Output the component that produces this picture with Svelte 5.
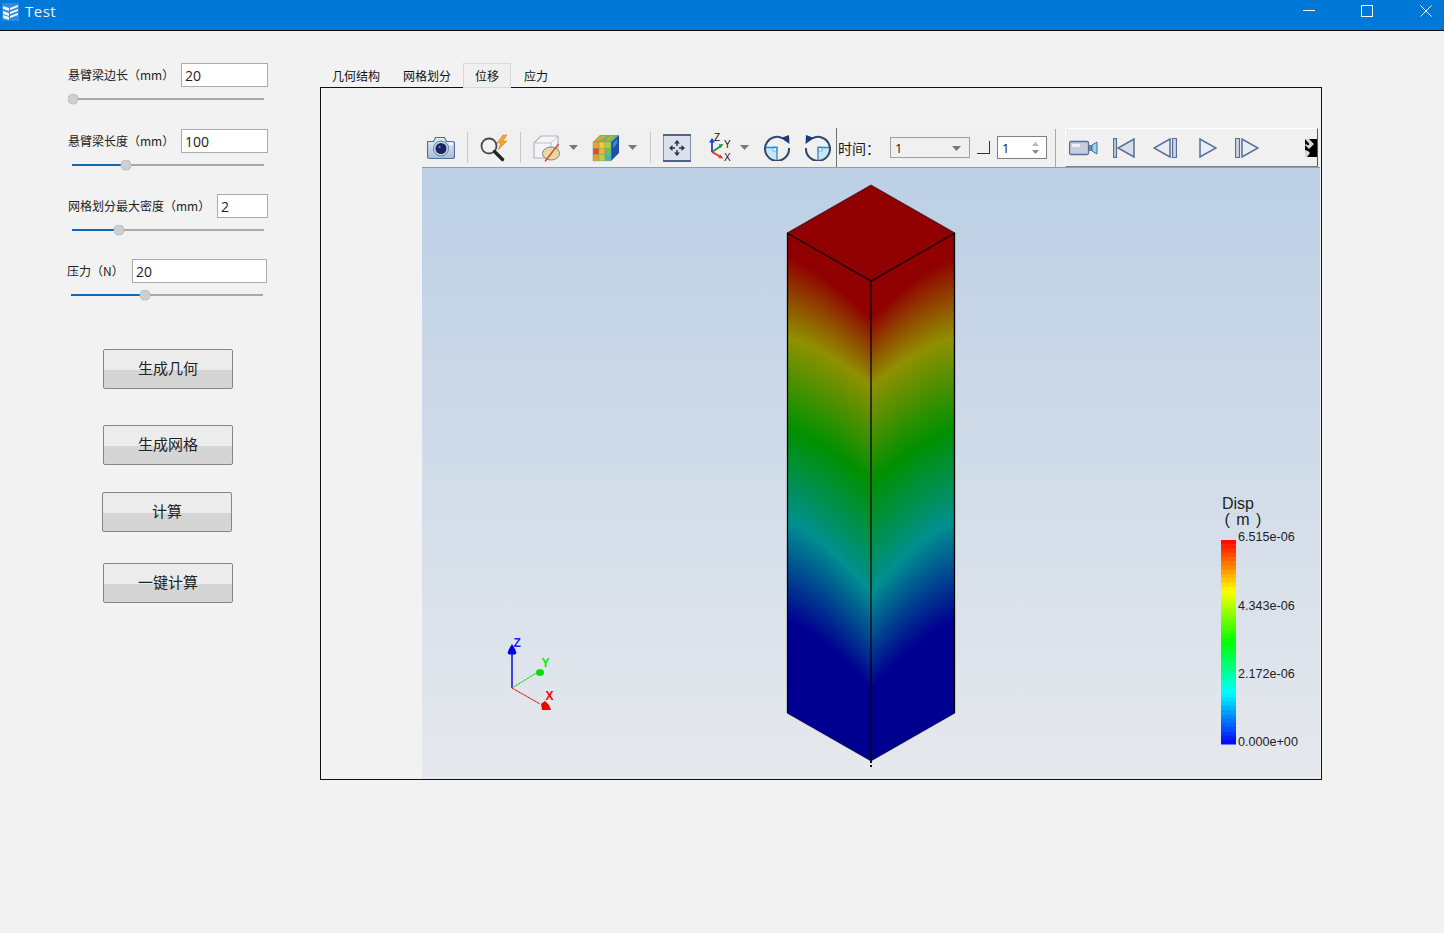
<script>
  const fields = [
    { label: "悬臂梁边长（mm）", value: "20", inputW: 87, pos: 1, cls: "" },
    { label: "悬臂梁长度（mm）", value: "100", inputW: 87, pos: 54, cls: "" },
    { label: "网格划分最大密度（mm）", value: "2", inputW: 51, pos: 47, cls: "" },
    { label: "压力（N）", value: "20", inputW: 135, pos: 74, cls: "shift" },
  ];
  const actions = [
    { text: "生成几何", cls: "b1" },
    { text: "生成网格", cls: "b2" },
    { text: "计算", cls: "b3" },
    { text: "一键计算", cls: "b4" },
  ];
  const tabs = ["几何结构", "网格划分", "位移", "应力"];

  // isolines on a side face: y at the outer edge, y at the centre edge
  const STOPS = [
    ["#900000", 258, 318],
    ["#909000", 338, 385],
    ["#009000", 430, 482],
    ["#009090", 522, 592],
    ["#000090", 622, 688],
  ];
  const STRIP = 2;
  const strips = Array.from({ length: 42 }, (_, i) => {
    const t = Math.pow((i + 0.5) / 42, 1.4);
    return {
      i,
      stops: STOPS.map(([c, a, b]) => ({
        c,
        off: ((a + (b - a) * t - 200) / 600).toFixed(4),
      })),
    };
  });

  function band(t) {
    // t = 0 bottom blue, 1 top red
    const s = t * 4;
    const k = s - Math.floor(s);
    const seg = Math.min(Math.floor(s), 3);
    const f = s >= 4 ? 1 : k;
    const v = Math.round(f * 255);
    if (seg === 0) return `rgb(0,${v},255)`;
    if (seg === 1) return `rgb(0,255,${255 - v})`;
    if (seg === 2) return `rgb(${v},255,0)`;
    return `rgb(255,${255 - v},0)`;
  }
  const BANDS = 48;
  const bands = Array.from({ length: BANDS }, (_, i) => ({
    y: 540 + (i * 204) / BANDS,
    c: band(1 - (i + 0.5) / BANDS),
  }));
  const legend = [
    { text: "6.515e-06", y: 541 },
    { text: "4.343e-06", y: 610 },
    { text: "2.172e-06", y: 678 },
    { text: "0.000e+00", y: 746 },
  ];
  const cubeColors = [
    ["#f0a030", "#f4c838", "#a8d040"],
    ["#e84828", "#f4b028", "#58c860"],
    ["#e8a020", "#b8d040", "#38b8c0"],
  ];
</script>

<div class="window">
  <header class="titlebar">
    <svg class="appicon" width="17" height="18" viewBox="0 0 17 18">
      <rect width="17" height="18" fill="#2b8ce0" />
      <path d="M1 3l6 2v3L1 6zM1 8l6 2v3l-6-2zM1 12l6 2v3l-6-2z" fill="#fff" opacity=".92" />
      <path d="M8 5l8-3v2L8 7zM8 9l8-3v2l-8 3zM8 13l8-3v2l-8 3z" fill="#fff" />
    </svg>
    <span class="title">Test</span>
    <div class="winbtns">
      <svg width="12" height="12" viewBox="0 0 12 12"><path d="M0 5.500h12" stroke="#fff" /></svg>
      <svg width="12" height="12" viewBox="0 0 12 12"><rect x=".5" y=".5" width="11" height="11" fill="none" stroke="#fff" /></svg>
      <svg width="12" height="12" viewBox="0 0 12 12"><path d="M.5.5l11 11M11.500.5l-11 11" stroke="#fff" /></svg>
    </div>
  </header>

  <div class="body">
    <aside class="side">
      {#each fields as f}
        <div class="field {f.cls}">
          <div class="row">
            <span class="lbl">{f.label}</span>
            <input class="num" value={f.value} style:width="{f.inputW}px" />
          </div>
          <div class="slider">
            <div class="fill" style:width="{f.pos}px"></div>
            <div class="knob" style:left="{f.pos}px"></div>
          </div>
        </div>
      {/each}
      <div class="actions">
        {#each actions as a}
          <button class="act {a.cls}">{a.text}</button>
        {/each}
      </div>
    </aside>

    <main class="main">
      <div class="tabs">
        {#each tabs as t, i}
          <div class="tab t{i}" class:on={i === 2}>{t}</div>
        {/each}
      </div>
      <section class="panel">
        <div class="viewer">
          <div class="toolbar">
            <!-- camera -->
            <svg class="g5" width="28" height="24" viewBox="0 0 28 24">
              <defs>
                <linearGradient id="cam" x1="0" y1="0" x2="0" y2="1">
                  <stop offset="0" stop-color="#e8edf5" /><stop offset="1" stop-color="#a9bcd6" />
                </linearGradient>
              </defs>
              <path d="M.5 5.500h6l2-4h9l2 4h6a2 2 0 0 1 2 2v13a2 2 0 0 1-2 2H2.500a2 2 0 0 1-2-2z" fill="url(#cam)" stroke="#4f6f9b" stroke-width="1.200" />
              <circle cx="14" cy="12.500" r="7.500" fill="#c9d6e8" stroke="#5f7ca6" />
              <circle cx="14" cy="12.500" r="5.500" fill="#14285f" />
              <circle cx="12.500" cy="11" r="1.200" fill="#5a78b8" />
              <rect x="22.500" y="7" width="3" height="2" fill="#fff" />
            </svg>
            <i class="sep g12"></i>
            <!-- magnifier with lightning -->
            <svg class="g12" width="29" height="28" viewBox="0 0 29 28">
              <circle cx="9" cy="12" r="7.500" fill="#eef2f6" stroke="#4a4a4a" stroke-width="1.800" />
              <path d="M14.500 17.500l8 8" stroke="#222" stroke-width="3.400" stroke-linecap="round" />
              <path d="M23 1l-6 8h4l-3 7 9-9h-4l4-6z" fill="#f0a830" stroke="#d08818" stroke-width=".6" />
            </svg>
            <i class="sep g11"></i>
            <!-- box with clipped ellipse -->
            <svg class="g12" width="27" height="28" viewBox="0 0 27 28">
              <path d="M1 9l7-7h17v14l-7 8H1z" fill="#f4f5f7" stroke="#aeb4c0" stroke-width="1.200" />
              <path d="M1 9h17l7-7M18 9v15" fill="none" stroke="#bcc2cc" />
              <ellipse cx="18" cy="19.500" rx="8.500" ry="6.500" fill="#ead9a0" stroke="#7d8390" />
              <path d="M25.500 10L12 27.500" stroke="#d9482e" stroke-width="1.400" />
            </svg>
            <svg class="g9 drop" width="9" height="5" viewBox="0 0 9 5"><path d="M0 0h9L4.500 5z" fill="#777" /></svg>
            <!-- rainbow cube -->
            <svg class="g14" width="27" height="28" viewBox="0 0 27 28">
              <path d="M1 8l7-7h19l-8 7z" fill="#5bbd70" />
              <path d="M3 7l6-5h5l-6 5zM13 7l6-5h3l-6 5z" fill="#e8a030" />
              <path d="M19 8l8-7v18l-8 8z" fill="#1c4fa8" />
              <path d="M21 9l4-4v5l-4 4z" fill="#3f86d8" />
              {#each cubeColors as rowC, r}
                {#each rowC as c, k}
                  <rect x={1 + k * 6} y={8 + r * 6.300} width="6" height="6.300" fill={c} stroke="#8a9a70" stroke-width=".5" />
                {/each}
              {/each}
            </svg>
            <svg class="g9 drop" width="9" height="5" viewBox="0 0 9 5"><path d="M0 0h9L4.500 5z" fill="#777" /></svg>
            <i class="sep g13"></i>
            <!-- reset view -->
            <svg class="g12" width="28" height="28" viewBox="0 0 28 28">
              <rect x=".5" y=".5" width="27" height="27" fill="#dbe0ea" stroke="#8292ad" />
              <rect x="0" y="0" width="28" height="2" fill="#4f6288" />
              <rect x="0" y="26" width="28" height="2" fill="#4f6288" />
              <path d="M14 9v3M14 16v3M9 14h3M16 14h3" stroke="#26344f" stroke-width="1.400" />
              <path d="M14 6l-3 3.500h6zM14 22l-3-3.500h6zM6 14l3.500-3v6zM22 14l-3.500-3v6z" fill="#26344f" />
            </svg>
            <!-- axes -->
            <svg class="g17" width="24" height="30" viewBox="0 -1 24 30">
              <path d="M4 18V7" stroke="#1c3fd0" stroke-width="1.800" />
              <path d="M4 4l-3 4.500h6z" fill="#1c3fd0" />
              <path d="M4 18l9-6" stroke="#1c9040" stroke-width="1.800" />
              <path d="M15.500 10l-5 .5 2 3.500z" fill="#1c9040" />
              <path d="M4 18l9 5" stroke="#e03030" stroke-width="1.800" />
              <path d="M15.500 24.500l-5-.5 1.500-3.500z" fill="#e03030" />
              <text x="6" y="7" class="ax">Z</text>
              <text x="16" y="13.500" class="ax">Y</text>
              <text x="16" y="27" class="ax">X</text>
            </svg>
            <svg class="g8 drop" width="9" height="5" viewBox="0 0 9 5"><path d="M0 0h9L4.500 5z" fill="#777" /></svg>
            <!-- rotate -->
            <svg class="g15" width="26" height="26" viewBox="0 0 26 26">
              <path d="M1 12h12v13A12.500 12.500 0 0 1 1 12z" fill="#c8e6f6" />
              <rect x="9" y="12" width="4" height="4" fill="#fff" stroke="#2b8ad0" stroke-width=".6" />
              <path d="M1 12.500h12V25" fill="none" stroke="#2b8ad0" stroke-width="1.300" />
              <path d="M19 3.500A12 12 0 1 0 25 13" fill="none" stroke="#2f4a6a" stroke-width="2" />
              <path d="M25.500 9L25 0l-8 3z" fill="#1a3a74" />
            </svg>
            <svg class="g15 flip" width="26" height="26" viewBox="0 0 26 26">
              <path d="M1 12h12v13A12.500 12.500 0 0 1 1 12z" fill="#c8e6f6" />
              <rect x="9" y="12" width="4" height="4" fill="#fff" stroke="#2b8ad0" stroke-width=".6" />
              <path d="M1 12.500h12V25" fill="none" stroke="#2b8ad0" stroke-width="1.300" />
              <path d="M19 3.500A12 12 0 1 0 25 13" fill="none" stroke="#2f4a6a" stroke-width="2" />
              <path d="M25.500 9L25 0l-8 3z" fill="#1a3a74" />
            </svg>
            <i class="vline g5"></i>
            <span class="timelbl">时间：</span>
            <div class="combo">
              <span>1</span>
              <svg width="9" height="5" viewBox="0 0 9 5"><path d="M0 0h9L4.500 5z" fill="#777" /></svg>
            </div>
            <div class="corner"></div>
            <div class="spin">
              <span>1</span>
              <svg width="7" height="12" viewBox="0 0 7 12">
                <path d="M3.500 0L7 4H0z" fill="#b5b5b5" /><path d="M0 8h7l-3.500 4z" fill="#8a8a8a" />
              </svg>
            </div>
            <i class="sep tall g8"></i>
            <div class="media">
              <svg class="m4" width="29" height="16" viewBox="0 0 29 16">
                <rect x=".5" y="1.500" width="19" height="13" rx="1.500" fill="#c4cedd" stroke="#566f99" stroke-width="1.300" />
                <rect x="3" y="4" width="8" height="3" fill="#eef2f7" />
                <path d="M20 5l3 0v6h-3z" fill="#6d82a6" />
                <path d="M23 5l5-3v12l-5-3z" fill="#8fd8ea" stroke="#4a6a9a" />
              </svg>
              <svg class="m15" width="22" height="20" viewBox="0 0 22 20">
                <rect x=".5" y=".5" width="3" height="19" fill="#c0cadc" stroke="#566f99" stroke-width="1.200" />
                <path d="M21 1v18L5 10z" fill="#d6dce8" stroke="#566f99" stroke-width="1.500" />
              </svg>
              <svg class="m18" width="24" height="20" viewBox="0 0 24 20">
                <path d="M17 1v18L1 10z" fill="#e8ecf3" stroke="#566f99" stroke-width="1.500" />
                <rect x="19.500" y=".5" width="4" height="19" fill="#ccd4e4" stroke="#566f99" stroke-width="1.200" />
              </svg>
              <svg class="m21" width="19" height="20" viewBox="0 0 19 20">
                <path d="M2 1v18l16-9z" fill="#e8ecf3" stroke="#566f99" stroke-width="1.500" />
              </svg>
              <svg class="m19" width="24" height="20" viewBox="0 0 24 20">
                <rect x=".5" y=".5" width="4" height="19" fill="#ccd4e4" stroke="#566f99" stroke-width="1.200" />
                <path d="M7 1v18l16-9z" fill="#e8ecf3" stroke="#566f99" stroke-width="1.500" />
              </svg>
              <svg class="more" width="12" height="18" viewBox="0 0 12 18">
                <rect x="0" y="0" width="12" height="18" fill="#000" />
                <path d="M0 0h4l5 5-5 5-4-4 1-1 2 1.500L4.500 5zM0 11l3 1 2 2-3 4H0z" fill="#f0f0f0" opacity=".9" />
              </svg>
            </div>
          </div>

          <svg class="canvas" width="898" height="611" viewBox="422 168 898 611">
            <defs>
              {#each strips as s}
                <linearGradient id="s{s.i}" gradientUnits="userSpaceOnUse" x1="0" y1="200" x2="0" y2="800">
                  {#each s.stops as st}
                    <stop offset={st.off} stop-color={st.c} />
                  {/each}
                </linearGradient>
              {/each}
              <clipPath id="faceL"><polygon points="787,233 871,281 871,761 787,713" /></clipPath>
              <clipPath id="faceR"><polygon points="871,281 955,233 955,713 871,761" /></clipPath>
            </defs>

            <polygon points="871,185 955,233 871,281 787,233" fill="#900000" />
            <g clip-path="url(#faceL)">
              {#each strips as s}
                <rect x={787 + s.i * STRIP} y="225" width={STRIP + 0.5} height="545" fill="url(#s{s.i})" />
              {/each}
            </g>
            <g clip-path="url(#faceR)">
              {#each strips as s}
                <rect x={953 - s.i * STRIP} y="225" width={STRIP + 0.5} height="545" fill="url(#s{s.i})" />
              {/each}
            </g>
            <g stroke="#000" fill="none">
              <path d="M787 233L871 281L955 233" stroke-width="1.100" />
              <path d="M787 233L871 185L955 233" stroke-width=".6" />
              <path d="M787.500 233V713M871 281V761M954.500 233V713" stroke-width="1.300" />
              <path d="M787 713L871 761L955 713" stroke-width=".5" />
            </g>
            <rect x="870" y="761" width="2" height="2" fill="#111" />
            <rect x="870" y="765" width="2" height="2" fill="#111" />

            <!-- orientation axes -->
            <path d="M512 688V652" stroke="#0000e0" stroke-width="1.400" />
            <path d="M512 644l-3 5-1.500 4 1.500 1.500h6l1.500-1.500-1.500-4z" fill="#0000e0" />
            <text x="513.500" y="647" class="gizmo" fill="#2020ff">Z</text>
            <path d="M512 688l26-16" stroke="#00e000" stroke-dasharray="3 .5" />
            <ellipse cx="540" cy="672.500" rx="4" ry="3.500" fill="#00e000" />
            <text x="541.500" y="667" class="gizmo" fill="#00f000">Y</text>
            <path d="M512 688l28 16" stroke="#f00000" stroke-dasharray="3 .5" />
            <path d="M541 704l4-3 4 4 2 5h-9z" fill="#f00000" />
            <text x="545.500" y="700" class="gizmo" fill="#ff0000">X</text>

            <!-- scalar bar -->
            {#each bands as b}
              <rect x="1221" y={b.y} width="15" height={204 / BANDS + 0.5} fill={b.c} />
            {/each}
            <text x="1222" y="509" class="ltitle">Disp</text>
            <text x="1224.500" y="525" class="ltitle unit">( m )</text>
            {#each legend as l}
              <text x="1238" y={l.y} class="ltick">{l.text}</text>
            {/each}
          </svg>
        </div>
      </section>
    </main>
  </div>
</div>

<style>
  :global(body) {
    background: #f2f2f2;
  }
  .window {
    width: 1444px;
    height: 933px;
    overflow: hidden;
    background: #f2f2f2;
    font-family: "Noto Sans CJK SC", "Liberation Sans", sans-serif;
    color: #1a1a1a;
  }

  .titlebar {
    display: flex;
    align-items: center;
    height: 30px;
    padding-left: 2px;
    background: #0078d7;
    border-bottom: 1px solid #0a0a0a;
    color: #fff;
  }
  .appicon {
    margin-top: -6px;
  }
  .title {
    margin-left: 6px;
    margin-top: -9px;
    font: 15px "Open Sans", sans-serif;
    letter-spacing: 0.5px;
    color: #eaf3fb;
  }
  .winbtns {
    display: flex;
    gap: 47px;
    margin-left: auto;
    margin-right: 12px;
    margin-top: -8px;
  }
  .winbtns svg:first-child {
    margin-right: -1px;
  }

  .body {
    display: flex;
  }
  .side {
    width: 320px;
    flex: none;
    padding: 32px 0 0 68px;
    box-sizing: border-box;
  }
  .field {
    width: 200px;
    height: 65px;
  }
  .field:first-child {
    height: 66px;
  }
  .field.shift {
    margin-left: -1px;
  }
  .row {
    display: flex;
    align-items: center;
    justify-content: space-between;
    height: 24px;
  }
  .lbl {
    font-size: 12px;
    white-space: nowrap;
    color: #222;
    margin-top: -1px;
  }
  .num {
    box-sizing: border-box;
    height: 24px;
    padding: 0 3px;
    border: 1px solid #ababab;
    background: #fff;
    font: 14px "Open Sans", sans-serif;
    color: #222;
    outline: none;
    flex: none;
  }
  .slider {
    position: relative;
    width: 192px;
    height: 2px;
    margin: 11px 0 0 4px;
    background: #a9a9a9;
  }
  .fill {
    height: 100%;
    background: #0f67b5;
  }
  .knob {
    position: absolute;
    top: 1px;
    width: 11px;
    height: 11px;
    box-sizing: border-box;
    border-radius: 50%;
    border: 1px dotted #aaa;
    background: #cfcfcf;
    transform: translate(-50%, -50%);
  }

  .actions {
    display: flex;
    flex-direction: column;
    padding-top: 25px;
  }
  .act {
    width: 130px;
    height: 40px;
    margin-left: 35px;
    padding: 0 0 3px;
    border: 1px solid #858585;
    border-radius: 2px;
    background: linear-gradient(#ececec 0 53%, #d5d5d5 53% 100%);
    font: 15px "Noto Sans CJK SC", sans-serif;
    color: #222;
  }
  .b2 {
    margin-top: 36px;
  }
  .b3 {
    margin-top: 27px;
    margin-left: 34px;
  }
  .b4 {
    margin-top: 31px;
  }

  .main {
    width: 1002px;
    padding-top: 32px;
  }
  .tabs {
    display: flex;
    height: 24px;
    font-size: 12px;
    color: #111;
  }
  .tab {
    box-sizing: border-box;
    height: 25px;
    padding: 1px 11px 0;
    line-height: 22px;
    position: relative;
    z-index: 1;
    border: 1px solid transparent;
    border-bottom: none;
  }
  .t1 {
    margin-left: -1px;
  }
  .t3 {
    margin-left: 1px;
  }
  .tab.on {
    background: #f0f0f0;
    border: 1px solid #d9d9d9;
  }
  .panel {
    box-sizing: border-box;
    height: 693px;
    padding: 40px 1px 0 101px;
    border: 1px solid #111;
  }
  .viewer {
    width: 898px;
  }

  .toolbar {
    display: flex;
    align-items: center;
    box-sizing: border-box;
    height: 40px;
    border-bottom: 1px solid #9a9a9a;
    background: #f0f0f0;
    font-size: 14px;
  }
  .toolbar > svg {
    flex: none;
  }
  .g5 { margin-left: 5px; }
  .g8 { margin-left: 8px; }
  .g9 { margin-left: 9px; }
  .g11 { margin-left: 11px; }
  .g12 { margin-left: 12px; }
  .g13 { margin-left: 13px; }
  .g14 { margin-left: 14px; }
  .g15 { margin-left: 15px; }
  .g17 { margin-left: 17px; }
  .flip {
    transform: scaleX(-1);
  }
  .sep {
    flex: none;
    width: 1px;
    height: 31px;
    background: #c9c9c9;
  }
  .sep.tall {
    height: 38px;
    background: #a8a8a8;
  }
  .vline {
    flex: none;
    align-self: stretch;
    width: 1px;
    background: #707070;
  }
  .ax {
    font: 10px "Liberation Sans", sans-serif;
    fill: #111;
  }
  .timelbl {
    flex: none;
    margin-left: 1px;
    width: 42px;
    margin-right: -5px;
    font-size: 14px;
    white-space: nowrap;
  }
  .combo {
    display: flex;
    align-items: center;
    justify-content: space-between;
    box-sizing: border-box;
    width: 80px;
    height: 21px;
    margin-left: 15px;
    padding: 1px 8px 0 4px;
    border: 1px solid #a0a0a0;
    font: 13px "Open Sans", sans-serif;
  }
  .corner {
    width: 13px;
    height: 13px;
    box-sizing: border-box;
    margin-left: 7px;
    border-right: 1px solid #333;
    border-bottom: 1px solid #333;
  }
  .spin {
    display: flex;
    align-items: center;
    justify-content: space-between;
    box-sizing: border-box;
    width: 50px;
    height: 23px;
    margin-left: 7px;
    padding: 0 7px 0 4px;
    border: 1px solid #808080;
    background: #fff;
    font: 13px "Open Sans", sans-serif;
  }
  .media {
    display: flex;
    align-items: center;
    align-self: stretch;
    box-sizing: border-box;
    width: 253px;
    margin-left: 9px;
    padding-top: 1px;
    border-top: 1px solid #fff;
    border-left: 1px solid #fff;
    border-right: 1px solid #555;
    border-bottom: 1px solid #808080;
  }
  .m4 { margin-left: 3px; }
  .m15 { margin-left: 15px; }
  .m18 { margin-left: 18px; }
  .m21 { margin-left: 21px; }
  .m19 { margin-left: 18px; }
  .more { margin-left: 46px; }

  .canvas {
    display: block;
    background: linear-gradient(#bccfe5, #e6e9ed);
  }
  .gizmo {
    font: bold 12px "Liberation Sans", sans-serif;
  }
  .ltitle {
    font: 16px "Liberation Sans", sans-serif;
    fill: #222;
  }
  .unit {
    letter-spacing: 1px;
  }
  .ltick {
    font: 12.600px "Liberation Sans", sans-serif;
    fill: #222;
  }
</style>
